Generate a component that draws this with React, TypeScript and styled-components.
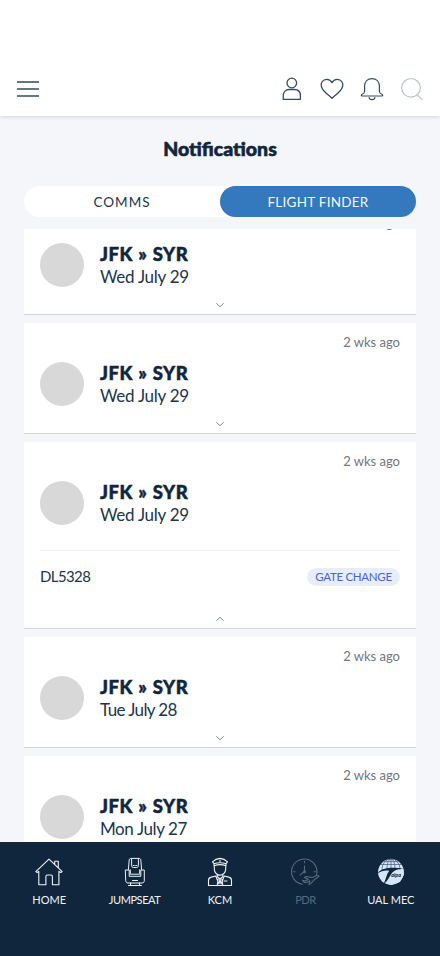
import React from 'react';
import styled, { createGlobalStyle } from 'styled-components';

const navy = '#11263d';

const GlobalStyle = createGlobalStyle`
  * { box-sizing: border-box; }
  body { margin: 0; background: #f5f6fa; font-family: Lato, 'Open Sans', sans-serif; color: ${navy}; }
`;

const Screen = styled.div`
  width: 440px;
  height: 956px;
  display: flex;
  flex-direction: column;
  overflow: hidden;
  background: #f5f6fa;
`;

const Header = styled.header`
  flex: none;
  height: 116px;
  padding: 0 16px 15px;
  display: flex;
  align-items: flex-end;
  justify-content: space-between;
  background: #fff;
  box-shadow: 0 1px 4px rgba(17, 38, 61, 0.16);
`;

const Actions = styled.div`
  display: flex;
  gap: 16px;
`;

const IconButton = styled.button<{ $muted?: boolean }>`
  width: 24px;
  height: 24px;
  padding: 0;
  border: 0;
  background: none;
  color: ${(p) => (p.$muted ? '#b9c3cb' : '#344a60')};
  svg { display: block; }
`;

const Title = styled.h1`
  flex: none;
  margin: 21px 0 26px;
  font-size: 19.5px;
  line-height: 23px;
  font-weight: 900;
  -webkit-text-stroke: 0.6px ${navy};
  text-align: center;
`;

const Tabs = styled.div`
  flex: none;
  display: flex;
  height: 31px;
  margin: 0 24px 12px;
  border-radius: 16px;
  background: #fff;
`;

const Tab = styled.button<{ $active?: boolean; $spacing: number }>`
  flex: 1;
  border: 0;
  padding: 0;
  border-radius: 16px;
  font: 400 13.5px/30px Lato, sans-serif;
  letter-spacing: ${(p) => p.$spacing}px;
  color: ${(p) => (p.$active ? '#f3f8fd' : '#20354b')};
  background: ${(p) => (p.$active ? '#3478bd' : 'transparent')};
`;

const Viewport = styled.main`
  flex: 1;
  min-height: 0;
  overflow: hidden;
  padding: 0 24px;
`;

const Feed = styled.div`
  display: flex;
  flex-direction: column;
  gap: 8px;
  margin-top: -25px;
`;

const Card = styled.article<{ $open?: boolean }>`
  height: ${(p) => (p.$open ? 187 : 111)}px;
  padding: 10px 16px 6px;
  display: flex;
  flex-direction: column;
  background: #fff;
  border-bottom: 1px solid #d2d5d9;
`;

const Age = styled.div`
  height: 28px;
  line-height: 18px;
  font-size: 13px;
  text-align: right;
  color: #70757f;
`;

const Summary = styled.div`
  display: flex;
  align-items: center;
  gap: 16px;
  height: 46px;
`;

const Avatar = styled.div`
  width: 44px;
  height: 44px;
  border-radius: 50%;
  background: #d8d8d8;
`;

const Route = styled.div`
  padding-top: 1px;
  font-size: 18.5px;
  line-height: 23px;
  font-weight: 900;
  letter-spacing: 0.5px;
  word-spacing: 0.5px;
  -webkit-text-stroke: 0.5px ${navy};
  white-space: nowrap;
`;

const DateText = styled.div<{ $spacing: number }>`
  font-size: 17px;
  line-height: 22px;
  letter-spacing: ${(p) => p.$spacing}px;
  color: #20354b;
  white-space: nowrap;
`;

const Detail = styled.div`
  margin-top: 24px;
  padding-top: 17px;
  border-top: 1px solid #f2f3f4;
  display: flex;
  align-items: center;
  justify-content: space-between;
`;

const FlightNumber = styled.span`
  font-size: 15px;
  line-height: 17px;
  padding-bottom: 1px;
  letter-spacing: -0.6px;
  color: #20354b;
`;

const Badge = styled.span`
  width: 93px;
  height: 18px;
  border-radius: 9px;
  background: #e8edfb;
  color: #4664d8;
  font-size: 11.5px;
  line-height: 18px;
  letter-spacing: -0.3px;
  text-align: center;
  white-space: nowrap;
`;

const Chevron = styled.svg`
  display: block;
  margin: auto auto 0;
  flex: none;
`;

const Nav = styled.nav`
  flex: none;
  height: 114px;
  padding: 15px 6.5px 0;
  display: grid;
  grid-template-columns: repeat(5, 1fr);
  align-items: start;
  background: #10263d;
`;

const NavItem = styled.div<{ $dim?: boolean; $spacing?: number }>`
  display: flex;
  flex-direction: column;
  align-items: center;
  gap: 5px;
  font-size: 11px;
  line-height: 16px;
  letter-spacing: ${(p) => p.$spacing ?? 0}px;
  color: ${(p) => (p.$dim ? '#596a7a' : '#f0f3f6')};
  svg { display: block; }
`;

const line = {
  fill: 'none',
  stroke: 'currentColor',
  strokeLinecap: 'round' as const,
  strokeLinejoin: 'round' as const,
};

const MenuIcon = () => (
  <svg width="24" height="24" viewBox="0 0 24 24" {...line} strokeLinecap="butt" strokeWidth="1.5">
    <path d="M1 5h22M1 12h22M1 19h22" />
  </svg>
);
const UserIcon = () => (
  <svg width="24" height="24" viewBox="0 0 24 24" {...line} strokeWidth="1.3">
    <circle cx="11.8" cy="6" r="4.8" />
    <path d="M3.2 22.3v-3.6c0-4 2.6-6.2 6-6.2h5.2c3.4 0 6 2.2 6 6.2v3.6z" />
  </svg>
);
const HeartIcon = () => (
  <svg width="24" height="24" viewBox="0 0 24 24" {...line} strokeWidth="1.3">
    <path d="M12 21.4C8.5 18 4.6 15.2 2.4 11.8C.2 8.1 1.1 4.5 4.1 3C7 1.7 10.2 2.6 12 5.7C13.8 2.6 17 1.7 19.9 3C22.9 4.5 23.8 8.1 21.6 11.8C19.4 15.2 15.5 18 12 21.4z" />
  </svg>
);
const BellIcon = () => (
  <svg width="24" height="24" viewBox="0 0 24 24" {...line} strokeWidth="1.2">
    <path d="M4.6 14.2V9.2C4.6 4.5 7.7 1.7 12 1.7S19.4 4.5 19.4 9.2v5c0 1.8.7 2.4 2 2.8c1.9.7 1.5 2 .3 2H2.3c-1.2 0-1.6-1.3.3-2c1.300-.4 2-1 2-2.800zM9.100 20.500c.2 1.300 1.300 2.100 2.900 2.100s2.700-.8 2.900-2.100" />
  </svg>
);
const SearchIcon = () => (
  <svg width="24" height="24" viewBox="0 0 24 24" {...line} strokeWidth="1.2">
    <circle cx="11" cy="10.8" r="9.3" />
    <path d="M17.2 17.7l4.9 4.9" />
  </svg>
);

const HomeIcon = () => (
  <svg width="30" height="30" viewBox="0 0 30 30" {...line} strokeWidth="1.1">
    <path d="M1.800 14.600L15 2.100l13.200 12.500l-1.400.9l-1.900-1.100v13.300h-6.500V19.600c0-1-.6-1.600-1.500-1.600h-3.500c-.9 0-1.500.6-1.500 1.600v8.100H4.800V14.400l-1.600 1.100zM20.700 7.400V4.300h3.600v6.500" />
  </svg>
);
const SeatIcon = () => (
  <svg width="30" height="30" viewBox="0 0 30 30" {...line} strokeWidth="1">
    <path d="M8.400 12.500L9.200 3c.1-1 .8-1.600 1.800-1.600h8c1 0 1.700.6 1.800 1.600l.8 9.500" />
    <path d="M11.600 2.200v6.300c0 1.300.6 2 1.900 2h3c1.300 0 1.900-.7 1.900-2V2.200M10.300 12.800v4.400h9.400v-4.400" />
    <path d="M5.700 13h3.500v6.300h11.600V13h3.500v10.700c0 1.400-.9 2.300-2.300 2.300H8c-1.400 0-2.300-.9-2.300-2.300zM8.500 28.500h13M10.500 26v2.500M19.500 26v2.500M12.500 23.500h5" />
    <path d="M13.200 8.500h.5M14.800 8.500h.5M16.400 8.500h.5" />
  </svg>
);
const PilotIcon = () => (
  <svg width="30" height="30" viewBox="0 0 30 30" {...line} strokeWidth="1.1">
    <path d="M9 6.700L7.500 4.900C9.400 3 12 1.600 15 1.400c3 .2 5.600 1.600 7.500 3.500L21 6.700c-4-1.200-8-1.200-12 0zM9 6.700v2.100c4-1.500 8-1.500 12 0V6.700M9.300 8.800v3.500c0 3.200 2.700 5.800 5.700 5.800s5.700-2.600 5.700-5.800V8.800M12.100 17.100v2.400L15 22l2.900-2.500v-2.400" />
    <path d="M3.500 28.500v-5.100c0-2 1-3 2.700-3.300l4.500-1.100l3.300 8L15 22l1 5l3.300-8l4.500 1.100c1.700.3 2.700 1.300 2.700 3.300v5.100zM19 24h3M13.200 22l-1 6M16.800 22l1 6M15 3.400v1.400" />
  </svg>
);
const ClockIcon = () => (
  <svg width="30" height="30" viewBox="0 0 30 30" {...line} strokeWidth="1.1">
    <path d="M12.500 27.300A12.700 12.700 0 1 1 26.500 18M14.500 4.300v1.500M3.500 14.800H5M24 14.800h1.500M14.500 9v5.500l-4.300 3.400" />
    <circle cx="14.5" cy="14.8" r="1" />
    <path d="M12.600 23.300l2.500.8l3.300-1.700l-4-1.900l1.700-.9l6.300.9l3.600-1.700c1.800-.7 3.200-.2 2.800.8c-.4.8-2.300 1.700-3.900 2.500l-4.500 4.800l-1.500.5l1-3.500c-2 1-4.300 1.800-5.700 1.500z" />
  </svg>
);

const GlobeLogo = () => (
  <svg width="30" height="30" viewBox="0 0 30 30">
    <circle cx="15" cy="15" r="12.9" fill="#d5e6fb" />
    <g fill="none" stroke="#3d5873" strokeWidth=".7">
      <path d="M15 2v9M4.6 7.5h20.8M7.5 4.600h15" />
      <ellipse cx="15" cy="11" rx="4" ry="9" />
      <ellipse cx="15" cy="12" rx="9" ry="10" />
    </g>
    <path d="M2.100 15.500L4 13h22.500l1.400 2.500v2L24 25L15 27.900L6 24.500z" fill="#d5e6fb" />
    <path d="M1.500 16.500C5.500 10.600 14 9.900 28.300 11.300C21.500 11.900 17.600 13.500 15.300 17C12.700 20.800 11.800 24.200 7.700 26.700C10 22 10.500 17.200 13.200 13.700C9.500 13 5 14 1.500 16.500z" fill="#10263d" />
    <text x="15.3" y="20" fill="#10263d" fontFamily="Lato, sans-serif" fontSize="5.8" fontWeight="900" fontStyle="italic" textLength="9.6" lengthAdjust="spacingAndGlyphs">alpa</text>
  </svg>
);

type Flight = { day: string; spacing: number; open?: boolean };
const flights: Flight[] = [
  { day: 'Wed July 29', spacing: -0.27 },
  { day: 'Wed July 29', spacing: -0.27 },
  { day: 'Wed July 29', spacing: -0.27, open: true },
  { day: 'Tue July 28', spacing: -0.6 },
  { day: 'Mon July 27', spacing: -0.4 },
];

const FlightCard = ({ day, spacing, open }: Flight) => (
  <Card $open={open}>
    <Age>2 wks ago</Age>
    <Summary>
      <Avatar />
      <div>
        <Route>JFK » SYR</Route>
        <DateText $spacing={spacing}>{day}</DateText>
      </div>
    </Summary>
    {open && (
      <Detail>
        <FlightNumber>DL5328</FlightNumber>
        <Badge>GATE CHANGE</Badge>
      </Detail>
    )}
    <Chevron width="10" height="6" viewBox="0 0 10 6" fill="none" stroke="#7c8997" strokeWidth="1">
      <path d={open ? 'M1.3 4.7L5 1.3l3.7 3.4' : 'M1.3 1.3L5 4.7l3.7-3.4'} />
    </Chevron>
  </Card>
);

export default function App() {
  return (
    <>
      <GlobalStyle />
      <Screen>
        <Header>
          <IconButton aria-label="Menu"><MenuIcon /></IconButton>
          <Actions>
            <IconButton aria-label="Profile"><UserIcon /></IconButton>
            <IconButton aria-label="Favorites"><HeartIcon /></IconButton>
            <IconButton aria-label="Notifications"><BellIcon /></IconButton>
            <IconButton aria-label="Search" $muted><SearchIcon /></IconButton>
          </Actions>
        </Header>
        <Title>Notifications</Title>
        <Tabs>
          <Tab $spacing={1}>COMMS</Tab>
          <Tab $spacing={0.25} $active>FLIGHT FINDER</Tab>
        </Tabs>
        <Viewport>
          <Feed>
            {flights.map((f, i) => <FlightCard key={i} {...f} />)}
          </Feed>
        </Viewport>
        <Nav>
          <NavItem><HomeIcon />HOME</NavItem>
          <NavItem $spacing={-0.45}><SeatIcon />JUMPSEAT</NavItem>
          <NavItem><PilotIcon />KCM</NavItem>
          <NavItem $dim $spacing={-0.5}><ClockIcon />PDR</NavItem>
          <NavItem><GlobeLogo />UAL MEC</NavItem>
        </Nav>
      </Screen>
    </>
  );
}
